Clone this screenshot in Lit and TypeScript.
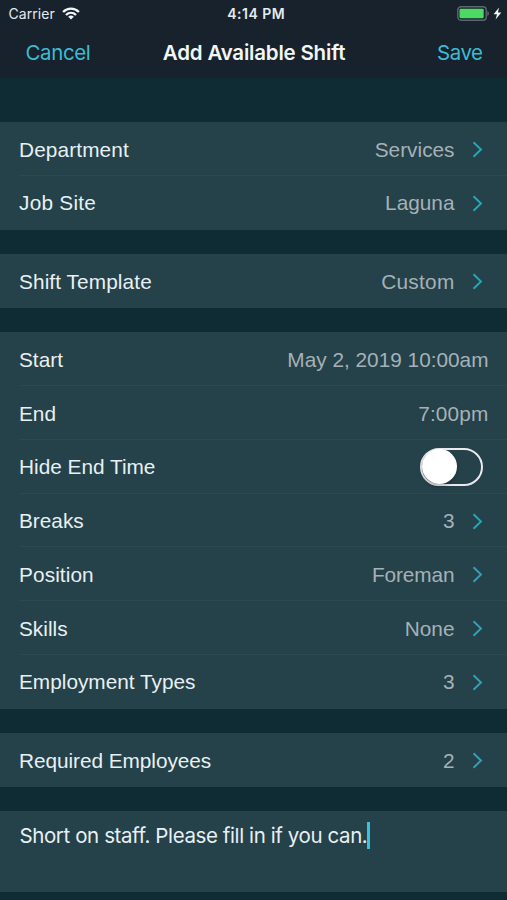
import { LitElement, html, css } from "lit";
import { customElement, property } from "lit/decorators.js";
import { styleMap } from "lit/directives/style-map.js";

interface Row {
  label: string;
  value?: string;
  kind?: "link" | "plain" | "switch";
  /** letter spacing in px: [label, value] */
  tracking?: [number, number];
}

const groups: Row[][] = [
  [
    { label: "Department", value: "Services", tracking: [0.12, 0] },
    { label: "Job Site", value: "Laguna", tracking: [0.25, 0] },
  ],
  [{ label: "Shift Template", value: "Custom", tracking: [0.1, 0.28] }],
  [
    { label: "Start", value: "May 2, 2019 10:00am", kind: "plain" },
    { label: "End", value: "7:00pm", kind: "plain", tracking: [0, 0.15] },
    { label: "Hide End Time", kind: "switch" },
    { label: "Breaks", value: "3" },
    { label: "Position", value: "Foreman", tracking: [0.1, -0.1] },
    { label: "Skills", value: "None" },
    { label: "Employment Types", value: "3" },
  ],
  [{ label: "Required Employees", value: "2", tracking: [-0.05, 0] }],
];

@customElement("status-bar")
class StatusBar extends LitElement {
  static styles = css`
    :host {
      display: grid;
      grid-template-columns: 1fr auto 1fr;
      align-items: center;
      height: 27px;
      padding: 0 5px 0 8.5px;
      box-sizing: border-box;
      color: #e4eaee;
      font: 400 14px/27px Inter, sans-serif;
    }
    .left, .right { display: flex; align-items: center; }
    .right { justify-content: flex-end; gap: 4px; }
    .carrier { letter-spacing: 0.05px; }
    .wifi { margin-left: 7px; }
    .time { font-weight: 600; letter-spacing: 0.5px; padding-left: 2px; }
    svg { display: block; }
  `;
  render() {
    return html`
      <div class="left">
        <span class="carrier">Carrier</span>
        <svg class="wifi" width="18" height="13" viewBox="0 0 18 13" fill="none" stroke="#f2f6f8" stroke-width="2.4">
          <path d="M1.1 5C5.6 .5 12.4 .5 16.9 5" />
          <path d="M4 8C6.9 5.2 11.1 5.2 14 8" />
          <path d="M9 12.4L6.2 9.7Q9 7.4 11.8 9.7Z" fill="#f2f6f8" stroke="none" />
        </svg>
      </div>
      <span class="time">4:14 PM</span>
      <div class="right">
        <svg width="32" height="15" viewBox="0 0 32 15">
          <rect x=".8" y=".8" width="28.4" height="13.4" rx="3.2" fill="none" stroke="#5d686e" stroke-width="1.4" />
          <rect x="2.5" y="2.8" width="24.2" height="9.4" rx="1.1" fill="#4cd964" />
          <path d="M30.3 5Q32 5.6 32 7.5Q32 9.4 30.3 10Z" fill="#5d686e" />
        </svg>
        <svg width="9" height="13" viewBox="0 0 9 13">
          <path d="M6.1 .6L.6 7.2H4L2.6 12.4L8.3 5.6H4.9Z" fill="#f2f6f8" />
        </svg>
      </div>
    `;
  }
}

@customElement("nav-bar")
class NavBar extends LitElement {
  static styles = css`
    :host {
      display: grid;
      grid-template-columns: 1fr auto 1fr;
      align-items: center;
      height: 51px;
      padding: 0 24.5px 0 25.5px;
      box-sizing: border-box;
      font: 400 20.5px/51px Inter, sans-serif;
    }
    .action { color: #3cbcd3; }
    .cancel { letter-spacing: -0.4px; }
    .save { justify-self: end; letter-spacing: -0.5px; }
    .title { color: #f1f6f8; font-weight: 600; letter-spacing: -0.2px; }
  `;
  render() {
    return html`
      <span class="action cancel">Cancel</span>
      <span class="title">Add Available Shift</span>
      <span class="action save">Save</span>
    `;
  }
}

@customElement("form-row")
class FormRow extends LitElement {
  @property({ attribute: false }) row!: Row;
  static styles = css`
    :host { display: block; padding-left: 19px; }
    .row {
      display: flex;
      align-items: center;
      height: 53.75px;
      padding: 2.5px 24px 0 0;
      box-sizing: border-box;
      border-bottom: 1px solid var(--line, #2c4951);
    }
    .row.plain { padding-right: 18.5px; }
    .row.switch { padding-top: 1.5px; }
    .label { flex: 1; color: #e7f0f4; }
    .value { color: #a5b1b8; }
    .chevron { display: block; margin-left: 17.5px; }
    .track {
      width: 63px;
      height: 38px;
      box-sizing: border-box;
      border: 2px solid #e9e9ee;
      border-radius: 19px;
    }
    .knob {
      width: 35px;
      height: 35px;
      margin: -0.5px 0 0 -0.5px;
      border-radius: 50%;
      background: #fff;
      box-shadow: 0 2px 4px rgba(0, 0, 0, 0.25);
    }
  `;
  render() {
    const { label, value, kind = "link", tracking = [0, 0] } = this.row;
    const spacing = (px: number) => styleMap({ letterSpacing: `${px}px` });
    return html`
      <div class="row ${kind}">
        <span class="label" style=${spacing(tracking[0])}>${label}</span>
        ${kind === "switch"
          ? html`<div class="track"><div class="knob"></div></div>`
          : html`<span class="value" style=${spacing(tracking[1])}>${value}</span>`}
        ${kind === "link"
          ? html`<svg class="chevron" width="11" height="17" viewBox="0 0 11 17" fill="none">
              <path d="M1.5 1.3L9 8.5L1.5 15.7" stroke="#2fa3b7" stroke-width="1.9" />
            </svg>`
          : null}
      </div>
    `;
  }
}

@customElement("app-root")
class AppRoot extends LitElement {
  static styles = css`
    :host {
      display: block;
      width: 507px;
      height: 900px;
      overflow: hidden;
      background: #0f2b33;
      font: 400 20.8px/26px "Liberation Sans", Arial, sans-serif;
    }
    .header { background: #17222c; }
    .form {
      display: flex;
      flex-direction: column;
      gap: 24.5px;
      padding-top: 44px;
    }
    .group { background: #254149; }
    .group form-row:last-child { --line: transparent; }
    .note {
      display: flex;
      align-items: flex-start;
      height: 80.5px;
      box-sizing: border-box;
      padding: 10.9px 19.5px 0;
      background: #254149;
      color: #e7f0f4;
      font: 400 20.5px/27px Inter, sans-serif;
      letter-spacing: -0.4px;
    }
    .caret { width: 2.5px; height: 27px; background: #35c4dc; }
  `;
  render() {
    return html`
      <div class="header">
        <status-bar></status-bar>
        <nav-bar></nav-bar>
      </div>
      <div class="form">
        ${groups.map(
          (rows) => html`<div class="group">
            ${rows.map((row) => html`<form-row .row=${row}></form-row>`)}
          </div>`
        )}
        <div class="note">
          <span>Short on staff. Please fill in if you can.</span><span class="caret"></span>
        </div>
      </div>
    `;
  }
}
